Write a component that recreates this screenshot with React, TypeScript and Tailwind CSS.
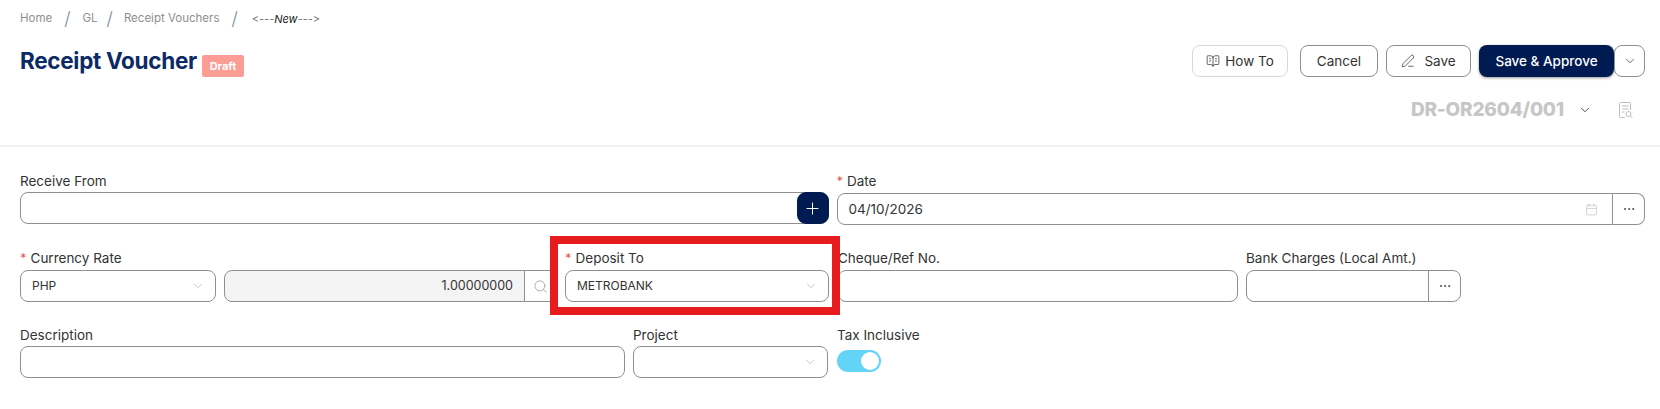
import type { ReactNode } from "react";
import { BookOpenText, Calendar, ChevronDown, Ellipsis, PenLine, Plus, Search } from "lucide-react";

const fieldBox = "h-8 rounded-[8px] border border-[#8f8f8f] bg-white";

function Label({ text, required, className = "mb-[2px]" }: { text: string; required?: boolean; className?: string }) {
  return (
    <div className={`flex h-[18px] items-center text-[13.5px] leading-[18px] text-[#333] ${className}`}>
      {required ? <span className="mr-[4px] text-[13px] font-light text-[#e53935]">*</span> : null}
      <span>{text}</span>
    </div>
  );
}

function SelectBox({ value }: { value?: string }) {
  return (
    <div className={`flex items-center justify-between pl-[11px] pr-[10px] text-[12px] text-[#333] ${fieldBox}`}>
      <span>{value}</span>
      <ChevronDown className="h-[14px] w-[14px] text-[#b5b5b5]" strokeWidth={1.25} />
    </div>
  );
}

function OutlineButton({ children, className = "" }: { children: ReactNode; className?: string }) {
  return (
    <button className={`flex h-8 items-center justify-center rounded-[8px] border border-[#8f8f8f] bg-white text-[13.5px] text-[#333] ${className}`}>
      {children}
    </button>
  );
}

function Slash({ className = "mx-[12px]" }: { className?: string }) {
  return <span className={`text-[18px] font-light leading-none text-[#7a8ba0] ${className}`}>/</span>;
}

function DocSearchIcon() {
  return (
    <svg viewBox="0 0 16 18" className="ml-[26px] h-[18px] w-[16px] text-[#bdbdbd]" fill="none" stroke="currentColor" strokeWidth="1">
      <path d="M7 16.5H2.5a1 1 0 0 1-1-1v-13a1 1 0 0 1 1-1h9a1 1 0 0 1 1 1V9" />
      <path d="M4 5h6.5M4 8h6.5M4 11h2.5" />
      <circle cx="10.5" cy="13" r="2.5" />
      <path d="M12.4 14.9l2 2" />
    </svg>
  );
}

export default function App() {
  return (
    <div className="relative h-[409px] w-[1660px] overflow-hidden bg-white font-['Inter','Open_Sans',sans-serif]">
      <div className="flex h-[38px] items-center pl-5 text-[11.5px] text-[#8f8f8f]">
        <span>Home</span>
        <Slash />
        <span>GL</span>
        <Slash className="ml-[9px] mr-[11px]" />
        <span>Receipt Vouchers</span>
        <Slash />
        <span className="ml-[2px] text-[11px] text-[#777] [font-variant-ligatures:none] [font-feature-settings:'calt'_0]">
          &lt;---<em className="text-[#222]">New</em>---&gt;
        </span>
      </div>

      <div className="mt-[7px] flex h-8 items-center justify-between pl-5 pr-[15px]">
        <div className="flex items-center">
          <h1 className="text-[22.5px] font-bold tracking-[-0.3px] text-[#0b2a66]">Receipt Voucher</h1>
          <span className="ml-[5px] mt-[10px] flex h-[22px] w-[42px] items-center justify-center rounded-[2px] bg-[#fb9d95] text-[11px] font-bold text-white">
            Draft
          </span>
        </div>
        <div className="flex items-center">
          <OutlineButton className="w-[96px] gap-[5px] border-[#d9d9d9]">
            <BookOpenText className="h-[14px] w-[14px]" strokeWidth={1.25} />
            How To
          </OutlineButton>
          <OutlineButton className="ml-3 w-[78px]">Cancel</OutlineButton>
          <OutlineButton className="ml-2 w-[85px] gap-[9px]">
            <PenLine className="h-[14px] w-[14px]" strokeWidth={1.25} />
            Save
          </OutlineButton>
          <button className="ml-2 flex h-8 w-[135px] items-center justify-center rounded-[8px] bg-[#001a52] text-[13.5px] font-medium text-white shadow-[0_1px_3px_rgba(0,0,0,0.4)]">
            Save &amp; Approve
          </button>
          <OutlineButton className="w-[31px]">
            <ChevronDown className="h-[14px] w-[14px]" strokeWidth={1.25} />
          </OutlineButton>
        </div>
      </div>

      <div className="mt-[18px] flex h-[30px] items-center justify-end pr-[26px]">
        <span className="text-[19px] font-extrabold tracking-[-0.2px] text-[#c6c6c6]">DR-OR2604/001</span>
        <ChevronDown className="ml-[14px] h-[14px] w-[14px] text-[#333]" strokeWidth={1.5} />
        <DocSearchIcon />
      </div>

      <div className="mt-[20px] h-[2px] bg-[#f2f2f2]" />

      <div className="pl-5 pr-[15px] pt-[25px]">
        <div className="grid grid-cols-2 gap-2">
          <div>
            <Label text="Receive From" />
            <div className={`relative ${fieldBox}`}>
              <button className="absolute -right-px -top-px flex h-8 w-8 items-center justify-center rounded-[9px] bg-[#001a52] text-white">
                <Plus className="h-[19px] w-[19px]" strokeWidth={1.25} />
              </button>
            </div>
          </div>
          <div>
            <Label text="Date" required className="mb-[3px]" />
            <div className="flex">
              <div className={`flex flex-1 items-center justify-between rounded-r-none pl-[11px] pr-[14px] text-[13.5px] text-[#333] ${fieldBox}`}>
                <span>04/10/2026</span>
                <Calendar className="h-[13px] w-[13px] text-[#c0c0c0]" strokeWidth={1.25} />
              </div>
              <div className="flex h-8 w-8 items-center justify-center rounded-r-[8px] border border-l-0 border-[#8f8f8f]">
                <Ellipsis className="h-[14px] w-[14px] text-[#444]" strokeWidth={1.5} />
              </div>
            </div>
          </div>
        </div>

        <div className="mt-[24px] flex">
          <div className="w-[196px]">
            <Label text="Currency Rate" required className="mb-[3px]" />
            <SelectBox value="PHP" />
          </div>
          <div className="ml-2 mt-[21px] flex w-[333px]">
            <div className="flex h-8 flex-1 items-center justify-end rounded-l-[8px] border border-[#8f8f8f] bg-[#f4f4f4] pr-[11px] text-[12.5px] text-[#333]">
              1.00000000
            </div>
            <div className="flex h-8 w-[32px] items-center justify-start border border-l-0 border-[#8f8f8f] pl-[8px]">
              <Search className="h-[15px] w-[15px] text-[#aaa]" strokeWidth={1.5} />
            </div>
          </div>
          <div className="ml-2 w-[264px]">
            <Label text="Deposit To" required className="mb-[3px]" />
            <SelectBox value="METROBANK" />
          </div>
          <div className="ml-[9px] w-[400px]">
            <Label text="Cheque/Ref No." className="mb-[3px]" />
            <div className={fieldBox} />
          </div>
          <div className="ml-2 w-[215px]">
            <Label text="Bank Charges (Local Amt.)" className="mb-[3px]" />
            <div className={`flex justify-end ${fieldBox}`}>
              <div className="flex w-8 items-center justify-center border-l border-[#8f8f8f]">
                <Ellipsis className="h-[14px] w-[14px] text-[#444]" strokeWidth={1.5} />
              </div>
            </div>
          </div>
        </div>

        <div className="mt-[24px] flex">
          <div className="w-[605px]">
            <Label text="Description" className="mb-[2px]" />
            <div className={fieldBox} />
          </div>
          <div className="ml-2 w-[195px]">
            <Label text="Project" className="mb-[2px]" />
            <SelectBox />
          </div>
          <div className="ml-[9px]">
            <Label text="Tax Inclusive" className="mb-[6px]" />
            <div className="flex h-[22px] w-[44px] items-center justify-end rounded-full bg-[#62d4f5] pr-[2px]">
              <div className="h-[18px] w-[18px] rounded-full bg-white" />
            </div>
          </div>
        </div>
      </div>

      <div className="pointer-events-none absolute left-[550px] top-[236px] h-[79px] w-[290px] border-[8px] border-[#e81c1c]" />
    </div>
  );
}
